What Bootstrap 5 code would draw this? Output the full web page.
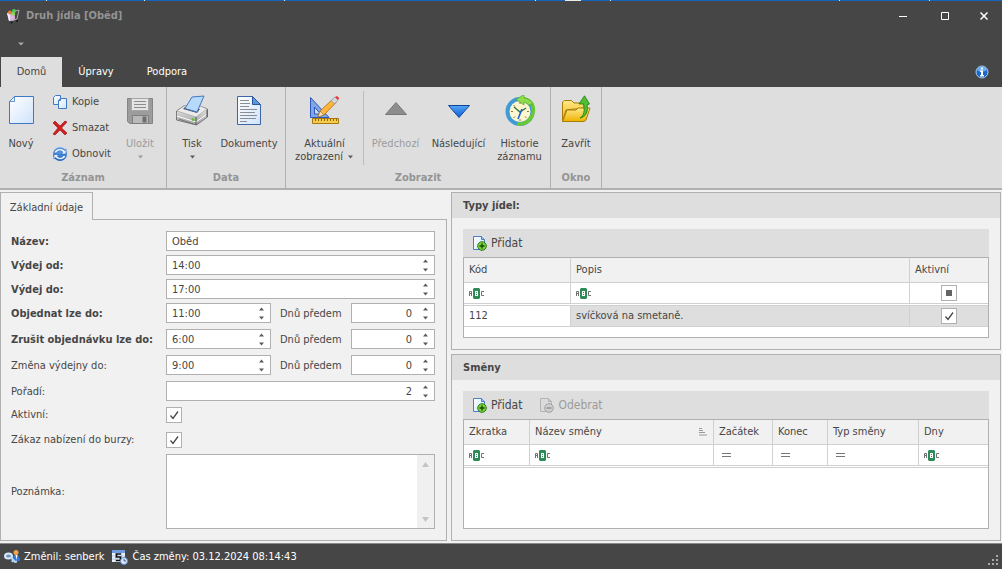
<!DOCTYPE html>
<html lang="cs">
<head>
<meta charset="utf-8">
<meta name="viewport" content="width=device-width, initial-scale=1">
<title>Druh jídla [Oběd]</title>
<link href="https://cdn.jsdelivr.net/npm/bootstrap@5.3.0/dist/css/bootstrap.min.css" rel="stylesheet">
<style>
:root{--dark:#464646;--line:#b0b0b0;--soft:#d0d0d0;--bar:#dedede;--pane:#f1f1f1;--ink:#464646}
body{font-family:"DejaVu Sans Condensed","DejaVu Sans",sans-serif;font-size:11px;line-height:14px;color:var(--ink);background:var(--pane)}
button,input,textarea{font:inherit;color:inherit}
.plain{border:0;background:none;padding:0}
svg{display:block;flex:none}
/* window frame */
.strip{height:1px;display:flex;gap:1px;background:#e8ece8}
.strip i{background:#1565c0}
.frame{background:var(--dark);color:#fff}
.titlebar{height:30px;padding-left:5px}
.titlebar h1{font-size:11px;line-height:14px;color:#949494;margin-left:5px}
.winbtn{width:42px;height:30px;display:grid;place-items:center}
.winbtn:last-child{width:36px}
.quick{height:26px;padding-left:17px}
.tabs{height:30px;padding-left:1px}
.rtab{height:30px;line-height:16px;color:#fff;text-decoration:none;display:flex;align-items:center;justify-content:center}
.rtab.active{background:var(--bar);color:var(--ink)}
.w-domu{width:61px}.w-upravy{width:68px}.w-podpora{width:74px}
/* ribbon */
.ribbon{background:var(--bar);border-bottom:2px solid var(--line);height:103px}
.rgroup{border-right:1px solid var(--line);height:101px}
.rgroup h2{font-size:11px;line-height:16px;color:#949494;text-align:center;margin:0;font-weight:700;height:18px}
.big{display:flex;flex-direction:column;align-items:center;justify-content:flex-start;text-align:center;padding-top:8px}
.big svg.pic{margin-bottom:10px}
.big .drop{margin-top:4px}
.lh13{line-height:13px}
.off,.off:disabled{color:#9b9b9b}
.stack{width:65px;margin-left:10px;padding-top:2px}
.stack button{height:26px;display:flex;align-items:center;gap:4px;white-space:nowrap}
.vline{width:1px;height:74px;background:#bcbcbc;margin-top:4px}
.g167{width:167px}.g119{width:119px}.g265{width:265px}.g51{width:51px}
.b42{width:42px}.b46{width:46px}.b50{width:50px}.b59{width:59px}.b63{width:63px}.b64{width:64px}.b77{width:77px}
/* work area */
.work{display:grid;grid-template-columns:447fr 550fr;gap:4px;padding:2px 1px 2px 0;flex:1}
.pane-tab{border:1px solid var(--line);border-bottom:0;background:var(--pane);height:28px;width:93px;margin-bottom:-1px;position:relative;z-index:1;margin-top:0;padding-top:2px;text-align:center}
.pane{border:1px solid var(--line);background:var(--pane)}
.formpane{padding:11px 11px 11px 10px}
.frow{display:grid;grid-template-columns:155px 1fr;height:24px;align-items:start}
.frow.r26{height:26px}
.frow.r25{height:25px}
.frow.r22{height:22px}
.frow.note{height:75px;align-items:center}
.frow > label,.frow .lab{line-height:22px}
.frow.chk > label{line-height:16px}
.field{border:1px solid var(--line);background:#fff;height:20px;display:flex;min-width:0}
.field input{border:0;outline:0;background:none;flex:1;min-width:0;padding:0 5px;height:18px}
.spin{width:17px;display:grid;grid-template-rows:9px 9px}
.spin button{display:grid;place-items:center}
.trio{display:grid;grid-template-columns:105fr 80fr 84fr}
.trio .lab{padding-left:9px}
.tick{appearance:none;width:16px;height:16px;margin:0;display:block;border:1px solid var(--line);background:#fff center/14px 14px no-repeat}
.tick:checked{background-image:url("data:image/svg+xml,%3Csvg xmlns='http://www.w3.org/2000/svg' viewBox='0 0 14 14'%3E%3Cpath d='M3.5 7.5l2.5 3 5-7' fill='none' stroke='%23464646' stroke-width='1.3'/%3E%3C/svg%3E")}
.tick.mid{background-image:linear-gradient(#646464,#646464);background-size:6px 6px}
.memo{border:1px solid var(--line);background:#fff;height:75px}
.memo textarea{border:0;outline:0;resize:none;flex:1;min-width:0;overflow:hidden}
.memo .scr{width:17px;background:#f0f0f0;padding:7px 0 6px}
.ghead{background:var(--bar);height:25px;line-height:25px;padding-left:11px;font-size:11px;font-weight:700;margin:0}
.gbody{padding:11px}
.tools{background:var(--bar);height:28px;padding-left:9px;gap:17px;font-size:12px}
.tools button{display:flex;align-items:center;gap:3px}
.gridbox{border:1px solid var(--line);background:#fff}
.gridbox.pad{padding-bottom:10px}
.gridbox table{width:100%;table-layout:fixed;border-collapse:separate;border-spacing:0}
.gridbox th,.gridbox td{border-right:1px solid var(--soft);border-bottom:1px solid var(--soft);padding:0 5px;font-weight:400;vertical-align:middle;white-space:nowrap}
.gridbox th:last-child,.gridbox td:last-child{border-right:0}
.gridbox th{height:25px;background:var(--pane)}
.gridbox .filt td{height:21px}
.gridbox .gap td{height:2px;padding:0;border-right:0}
.gridbox .rec td{height:21px}
.gridbox .sel{background:var(--bar)}
.gridbox .tick{margin:auto}
.c107{width:107px}.c78{width:78px}.c66{width:66px}.c59{width:59px}.c55{width:55px}.c91{width:91px}.c69{width:69px}
.status{background:var(--dark);color:#fff;height:26px;border-top:1px solid #8a8a8a;padding:0 3px 0 4px}
</style>
<script src="https://cdn.jsdelivr.net/npm/bootstrap@5.3.0/dist/js/bootstrap.bundle.min.js"></script>
</head>
<body class="d-flex flex-column min-vh-100">
<!-- shared glyphs and gradients -->
<svg width="0" height="0" class="position-absolute" aria-hidden="true">
<defs>
<linearGradient id="gp" x2="1" y2="1"><stop offset="0" stop-color="#fff"/><stop offset="1" stop-color="#cfe3fb"/></linearGradient>
<linearGradient id="gb" x2="0" y2="1"><stop offset="0" stop-color="#7db8f5"/><stop offset="1" stop-color="#1b5fc4"/></linearGradient>
<linearGradient id="gd" x2="0" y2="1"><stop offset="0" stop-color="#55a5f5"/><stop offset="1" stop-color="#0b5fd6"/></linearGradient>
<linearGradient id="gg" x2="0" y2="1"><stop offset="0" stop-color="#f3f3f3"/><stop offset="1" stop-color="#9a9a9a"/></linearGradient>
<linearGradient id="gy" x2="0" y2="1"><stop offset="0" stop-color="#ffe98a"/><stop offset="1" stop-color="#eeb200"/></linearGradient>
<symbol id="up" viewBox="0 0 7 4"><path d="M1 3.500h5L3.500.5z" fill="#5a5a5a"/></symbol>
<symbol id="dn" viewBox="0 0 7 4"><path d="M1 .5h5L3.500 3.500z" fill="#5a5a5a"/></symbol>
<symbol id="abc" viewBox="0 0 16 11"><path d="M5 0h5l1 1v9l-1 1H5L4 10V1z" fill="#2e8b57"/><path d="M.5 8V3.500h2V8M.5 5.500h2M15 3.500h-2.500v4H15" fill="none" stroke="#707070"/><path d="M6 3h3v5H6z" fill="#fff"/><path d="M7 4h1v1H7zM7 6h1v1H7z" fill="#2e8b57"/></symbol>
<symbol id="eq" viewBox="0 0 9 4"><path d="M0 .5h9M0 3.500h9" stroke="#777"/></symbol>
<symbol id="add" viewBox="0 0 16 16"><path d="M1.500 1.500h8l3 3v10h-11z" fill="url(#gp)" stroke="#4a7fc0"/><path d="M9.500 1.500v3h3" fill="#9cc3ee" stroke="#4a7fc0"/><circle cx="10" cy="11" r="4.300" fill="#7bd63c" stroke="#2a7a12"/><path d="M7.500 11h5M10 8.500v5" stroke="#174d08" stroke-width="1.400"/></symbol>
<symbol id="rem" viewBox="0 0 16 16"><path d="M1.500 1.500h8l3 3v10h-11z" fill="#dadada" stroke="#b3b3b3"/><path d="M9.500 1.500v3h3" fill="#c4c4c4" stroke="#b3b3b3"/><circle cx="10" cy="11" r="4.300" fill="#cfcfcf" stroke="#a0a0a0"/><path d="M7.500 11h5" stroke="#8c8c8c" stroke-width="1.400"/></symbol>
</defs></svg>

<div class="strip"><i style="flex:46"></i><i style="flex:97"></i><i style="flex:138"></i><i style="flex:250"></i><i style="flex:29"></i><i style="flex:14;background:#e8ece8"></i><i style="flex:29"></i><i style="flex:227"></i><i style="flex:89"></i><i style="flex:72"></i></div>
<header class="frame">
  <div class="titlebar d-flex align-items-center">
    <svg width="16" height="16" viewBox="0 0 16 16"><path d="M2 5l7-1 1 8-6 1z" fill="#b9a7e6"/><path d="M2 5l3-.5.600 8.300L4 13z" fill="#eef0ff"/><path d="M5.500 7l4-.5.500 5-4 1z" fill="#e6b3dd"/><circle cx="5" cy="4.500" r="2" fill="#e97d3c"/><circle cx="9" cy="3" r="2" fill="#54c94a"/><circle cx="8.500" cy="6" r="1.700" fill="#8bdc55"/><path d="M10.500 3L14 2l-2 9-6 2" fill="none" stroke="#a9a9a9"/><circle cx="6.500" cy="14.500" r="1" fill="#111"/><circle cx="12" cy="13" r="1" fill="#111"/></svg>
    <h1 class="fw-bold mb-0 flex-grow-1">Druh jídla [Oběd]</h1>
    <button class="plain winbtn" aria-label="Minimalizovat"><svg width="8" height="8" viewBox="0 0 8 8"><path d="M0 4.500h8" stroke="#fff"/></svg></button>
    <button class="plain winbtn" aria-label="Maximalizovat"><svg width="8" height="8" viewBox="0 0 8 8"><path d="M.5.5h7v7h-7z" fill="none" stroke="#fff"/></svg></button>
    <button class="plain winbtn" aria-label="Zavřít okno"><svg width="8" height="8" viewBox="0 0 8 8"><path d="M.5.5l7 7M7.500.5l-7 7" stroke="#fff" stroke-width="1.500"/></svg></button>
  </div>
  <div class="quick d-flex align-items-center"><button class="plain" aria-label="Panel rychlého přístupu"><svg width="7" height="4" viewBox="0 0 7 4"><path d="M1 .5h6L4 3.500z" fill="#a8a8a8"/></svg></button></div>
  <nav class="tabs d-flex align-items-center">
    <a href="#" class="rtab active w-domu">Domů</a>
    <a href="#" class="rtab w-upravy">Úpravy</a>
    <a href="#" class="rtab w-podpora">Podpora</a>
    <button class="plain ms-auto me-2 pe-1" aria-label="Informace"><svg width="16" height="16" viewBox="0 0 16 16"><circle cx="8" cy="8" r="6" fill="#1b68cc" stroke="#a9cdf5"/><path d="M3 6a5.400 5.400 0 0 1 10 0q-5 3-10 0z" fill="#6fb1f2"/><path d="M7 3.500h2v2H7zM6 6.500h3V11h1v1.500H6V11h1V8H6z" fill="#fff"/></svg></button>
  </nav>
</header>

<div class="ribbon d-flex">
  <section class="rgroup g167 d-flex flex-column">
    <div class="d-flex flex-grow-1">
      <button class="plain big b42"><svg class="pic" width="32" height="32" viewBox="0 0 32 32"><path d="M9.500 1.500h19v27h-24v-22z" fill="url(#gp)" stroke="#3f79c4"/><path d="M4.500 6.500h5v-5z" fill="#eaf4ff" stroke="#3f79c4" stroke-width=".8"/></svg>Nový</button>
      <div class="stack d-flex flex-column">
        <button class="plain"><svg width="16" height="16" viewBox="0 0 16 16"><path d="M3.500 1.500h5v9h-7v-7z" fill="url(#gp)" stroke="#3f79c4"/><path d="M8.500 4.500h6v10h-8v-8z" fill="url(#gp)" stroke="#3f79c4"/><path d="M6.500 6.500h2v-2z" fill="#fff" stroke="#3f79c4"/></svg>Kopie</button>
        <button class="plain"><svg width="16" height="16" viewBox="0 0 16 16"><path d="M1 3l2-2 5 5 5-5 2 1-5.500 6L15 13l-2 2-5-5-5 5-2-1 5-6z" fill="#d81e1e" stroke="#8d0d0d" stroke-width=".6"/></svg>Smazat</button>
        <button class="plain"><svg width="16" height="16" viewBox="0 0 16 16"><circle cx="8" cy="8" r="7" fill="url(#gb)"/><path d="M2 7c1-5 8-6 10.500-2.500L14 3v5H9l1.800-1.800C9 4 5.500 4.500 4.500 7zM14 9.500c-1 4.500-7.500 5.500-10.500 2L2 13V8.500h5L5.400 10.200c2 2 5 1.500 6-.7z" fill="#e4f2ff" stroke="#1c5bb0" stroke-width=".6"/></svg>Obnovit</button>
      </div>
      <button class="plain big b46 off" disabled><svg class="pic" width="32" height="32" viewBox="0 0 32 32"><path d="M3.500 3.500h25v25h-23l-2-2z" fill="#9c9c9c" stroke="#858585"/><path d="M7.500 3.500h17v12h-17z" fill="#e4e4e4" stroke="#a8a8a8"/><path d="M10 6.500h12M10 9.500h12M10 12.500h12" stroke="#8c8c8c"/><path d="M8.500 20.500h16v8h-16z" fill="#b9b9b9" stroke="#7e7e7e"/><path d="M18.500 21.500h4v6h-4z" fill="#6e6e6e"/></svg>Uložit<svg class="drop opacity-50" width="7" height="4"><use href="#dn"/></svg></button>
    </div>
    <h2>Záznam</h2>
  </section>
  <section class="rgroup g119 d-flex flex-column">
    <div class="d-flex flex-grow-1">
      <button class="plain big b50"><svg class="pic" width="34" height="32" viewBox="0 0 34 32"><path d="M1.500 16l7-5h16l8 3v8l-11 8L1.500 25z" fill="url(#gg)" stroke="#666" stroke-width=".8"/><path d="M2 16l7-5h16l7 3-11 8z" fill="#ececec" stroke="#999" stroke-width=".6"/><path d="M8 14l2-2 15 2-3 4z" fill="#505050"/><path d="M10 13.500L17 2l12-1-7 16z" fill="#b7dafa" stroke="#3f79c4"/><path d="M2 21l19 6 11-8" stroke="#fff" fill="none"/><path d="M21 22v8M32 15v7" stroke="#555" fill="none"/><path d="M4 24l14 5" stroke="#777"/><circle cx="18" cy="24.500" r="1.500" fill="#62c42c"/></svg>Tisk<svg class="drop" width="7" height="4"><use href="#dn"/></svg></button>
      <button class="plain big b64"><svg class="pic" width="32" height="32" viewBox="0 0 32 32"><path d="M4.500 1.500h15l8 8v20h-23z" fill="url(#gp)" stroke="#3c66a8"/><path d="M19.500 1.500v8h8z" fill="#5b97de" stroke="#2b57a0"/><path d="M7 5.500h9M7 8.500h10M7 11.500h9M7 14.500h17M7 17.500h15M7 20.500h17M7 23.500h16M7 26.500h7" stroke="#8a8f96"/></svg>Dokumenty</button>
    </div>
    <h2>Data</h2>
  </section>
  <section class="rgroup g265 d-flex flex-column">
    <div class="d-flex flex-grow-1">
      <button class="plain big b77 lh13"><svg class="pic" width="32" height="32" viewBox="0 0 32 32"><path d="M1.500 2.500L20 22.500H1.500z" fill="#7ea6e8" stroke="#2d58b8"/><path d="M5.500 12l6 7h-6z" fill="#dedede" stroke="#2d58b8"/><path d="M3.500 23.500h26v5h-26z" fill="#f5cb4a" stroke="#a67a10"/><path d="M6.500 24v2M9.500 24v2M12.500 24v2M15.500 24v2M18.500 24v2M21.500 24v2M24.500 24v2M27.500 24v2" stroke="#8a6410"/><path d="M9 22l2-6L24 4l3 3.500L15 20z" fill="#ffb53a" stroke="#95600c" stroke-width=".7"/><path d="M9 22l2-6 4 4z" fill="#f7dfba" stroke="#8a6a40" stroke-width=".6"/><path d="M22 5.500L26 2l3 3-3.500 4z" fill="#d2d6dc" stroke="#777" stroke-width=".5"/><path d="M26 2l2-1 2.200 2.200L29 5z" fill="#e33"/></svg>Aktuální<span class="d-flex align-items-center">zobrazení<svg class="ms-1" width="7" height="4"><use href="#dn"/></svg></span></button>
      <div class="vline"></div>
      <button class="plain big b63 off" disabled><svg class="pic" width="32" height="32" viewBox="0 0 32 32"><path d="M5.500 19.500h21l-10.500-12z" fill="#8d8d8d" stroke="#777"/></svg>Předchozí</button>
      <button class="plain big b63"><svg class="pic" width="32" height="32" viewBox="0 0 32 32"><path d="M5.500 10.500h21L16 22.500z" fill="url(#gd)" stroke="#0d459c"/></svg>Následující</button>
      <button class="plain big b59 lh13"><svg class="pic" width="32" height="32" viewBox="0 0 32 32"><circle cx="16" cy="16.500" r="12.500" fill="#fff6cf" stroke="#3f9bd6" stroke-width="4"/><path d="M15 4C25 2 31 10 29 18s-9 12-16 11" fill="none" stroke="#6cc832" stroke-width="3.500"/><path d="M12 4.500l8-5V3c4 .5 8 3 9 6l-4 1-5-3v3z" fill="#8cdc4c" stroke="#4aa41c" stroke-width=".6"/><path d="M16 7v2M16 24v2M7 16.500h2M23 16.500h2M9.500 10l1.500 1.500M22.500 23L21 21.500M9.500 23l1.500-1.500" stroke="#8a7440"/><path d="M10 12l6 5 6-4" fill="none" stroke="#3a7a4a" stroke-width="1.500"/><path d="M18 14l-4 10" stroke="#1763d8" stroke-width="1.600"/></svg>Historie<br>záznamu</button>
    </div>
    <h2>Zobrazit</h2>
  </section>
  <section class="rgroup g51 d-flex flex-column">
    <div class="d-flex flex-grow-1">
      <button class="plain big b50"><svg class="pic" width="32" height="32" viewBox="0 0 32 32"><path d="M2.500 26.500V7l2-1.500h7L14 8h10v5l-18 2z" fill="url(#gy)" stroke="#a87d08"/><path d="M2.500 26.500L7 15h9l2-2h12l-4 12-2 1.500z" fill="url(#gy)" stroke="#a87d08"/><path d="M20 23c4-2 5-8 3.500-14H19L24.500.8 29.500 9l-2.500 1c1.500 7-1.500 12-7 13z" fill="#4fc02f" stroke="#1c7a12" stroke-width=".8"/></svg>Zavřít</button>
    </div>
    <h2>Okno</h2>
  </section>
</div>

<main class="work">
  <section class="d-flex flex-column">
    <button class="plain pane-tab">Základní údaje</button>
    <form class="pane formpane flex-grow-1">
      <div class="frow"><label class="fw-bold" for="nazev">Název:</label><div class="field"><input id="nazev" value="Oběd"></div></div>
      <div class="frow"><label class="fw-bold" for="vod">Výdej od:</label><div class="field"><input id="vod" value="14:00"></div></div>
      <div class="frow"><label class="fw-bold" for="vdo">Výdej do:</label><div class="field"><input id="vdo" value="17:00"></div></div>
      <div class="frow r26"><label class="fw-bold" for="obj">Objednat lze do:</label><div class="trio"><div class="field"><input id="obj" value="11:00"></div><label class="lab" for="d1">Dnů předem</label><div class="field"><input id="d1" class="text-end" value="0"></div></div></div>
      <div class="frow r26"><label class="fw-bold" for="zru">Zrušit objednávku lze do:</label><div class="trio"><div class="field"><input id="zru" value="6:00"></div><label class="lab" for="d2">Dnů předem</label><div class="field"><input id="d2" class="text-end" value="0"></div></div></div>
      <div class="frow r26"><label for="zme">Změna výdejny do:</label><div class="trio"><div class="field"><input id="zme" value="9:00"></div><label class="lab" for="d3">Dnů předem</label><div class="field"><input id="d3" class="text-end" value="0"></div></div></div>
      <div class="frow r26"><label for="por">Pořadí:</label><div class="field"><input id="por" class="text-end" value="2"></div></div>
      <div class="frow r25 chk"><label for="akt">Aktivní:</label><input id="akt" type="checkbox" class="tick" checked></div>
      <div class="frow r22 chk"><label for="zak">Zákaz nabízení do burzy:</label><input id="zak" type="checkbox" class="tick" checked></div>
      <div class="frow note"><label for="poz">Poznámka:</label><div class="memo d-flex"><textarea id="poz"></textarea><div class="scr d-flex flex-column justify-content-between align-items-center"><svg width="7" height="5" viewBox="0 0 7 5"><path d="M0 5h7L3.500 0z" fill="#c4c4c4"/></svg><svg width="7" height="5" viewBox="0 0 7 5"><path d="M0 0h7L3.500 5z" fill="#c4c4c4"/></svg></div></div></div>
    </form>
  </section>

  <div class="d-flex flex-column gap-1">
    <section class="pane">
      <h2 class="ghead">Typy jídel:</h2>
      <div class="gbody">
        <div class="tools d-flex align-items-center"><button class="plain"><svg width="16" height="16"><use href="#add"/></svg>Přidat</button></div>
        <div class="gridbox pad">
          <table>
            <colgroup><col class="c107"><col><col class="c78"></colgroup>
            <thead><tr><th>Kód</th><th>Popis</th><th>Aktivní</th></tr></thead>
            <tbody>
              <tr class="filt"><td><svg width="16" height="11"><use href="#abc"/></svg></td><td><svg width="16" height="11"><use href="#abc"/></svg></td><td><input type="checkbox" class="tick mid" aria-label="Filtr aktivní"></td></tr>
              <tr class="gap"><td colspan="3"></td></tr>
              <tr class="rec"><td>112</td><td class="sel">svíčková na smetaně.</td><td class="sel"><input type="checkbox" class="tick" aria-label="Aktivní" checked></td></tr>
            </tbody>
          </table>
        </div>
      </div>
    </section>
    <section class="pane flex-grow-1 d-flex flex-column">
      <h2 class="ghead">Směny</h2>
      <div class="gbody flex-grow-1 d-flex flex-column">
        <div class="tools d-flex align-items-center"><button class="plain"><svg width="16" height="16"><use href="#add"/></svg>Přidat</button><button class="plain off" disabled><svg width="16" height="16"><use href="#rem"/></svg>Odebrat</button></div>
        <div class="gridbox flex-grow-1">
          <table>
            <colgroup><col class="c66"><col><col class="c59"><col class="c55"><col class="c91"><col class="c69"></colgroup>
            <thead><tr><th>Zkratka</th><th><span class="d-flex justify-content-between align-items-center">Název směny<svg width="9" height="8" viewBox="0 0 9 8"><path d="M0 .5h3M0 2.500h4M0 4.500h6M0 7h8" stroke="#999"/></svg></span></th><th>Začátek</th><th>Konec</th><th>Typ směny</th><th>Dny</th></tr></thead>
            <tbody>
              <tr class="filt"><td><svg width="16" height="11"><use href="#abc"/></svg></td><td><svg width="16" height="11"><use href="#abc"/></svg></td><td class="ps-2"><svg width="9" height="4"><use href="#eq"/></svg></td><td class="ps-2"><svg width="9" height="4"><use href="#eq"/></svg></td><td class="ps-2"><svg width="9" height="4"><use href="#eq"/></svg></td><td><svg width="16" height="11"><use href="#abc"/></svg></td></tr>
              <tr class="gap"><td colspan="6"></td></tr>
            </tbody>
          </table>
        </div>
      </div>
    </section>
  </div>
</main>

<footer class="status d-flex align-items-center">
  <svg width="16" height="16" viewBox="0 0 16 16"><circle cx="12" cy="3.500" r="2.500" fill="#f0a050"/><path d="M8 12c0-4 2-6 4-6s4 2 4 6z" fill="#2f78d8"/><path d="M11.500 6l1 5 1-5z" fill="#fff"/><ellipse cx="4.500" cy="7" rx="3.500" ry="2.500" fill="#6f93bd" stroke="#d7e9fb" stroke-width="2"/><path d="M7 8.500l4 4.500 2-.5M9 11L8 13" fill="none" stroke="#b8d4f2" stroke-width="2"/></svg>
  <span class="ms-1">Změnil: senberk</span>
  <svg class="ms-2 me-1" width="16" height="16" viewBox="0 0 16 16"><path d="M0 1h13v12H0z" fill="#e9f1fb"/><path d="M0 1h13v3H0z" fill="#6f9de0"/><path d="M0 7h13M0 10h13M3.500 4v9M9.500 4v9" stroke="#b4c8e2"/><path d="M9 5H4.500v3h4v3.500H4" fill="none" stroke="#111" stroke-width="1.700"/><circle cx="12" cy="12" r="3.500" fill="#dcebfc" stroke="#5b8ccb"/><path d="M12 10v2h2" fill="none" stroke="#335" stroke-width=".8"/></svg>
  <span class="ms-px">Čas změny: 03.12.2024 08:14:43</span>
  <svg class="ms-auto mt-2" width="11" height="11" viewBox="0 0 11 11"><path d="M8 0h2v2H8zM4 4h2v2H4zM8 4h2v2H8zM0 8h2v2H0zM4 8h2v2H4zM8 8h2v2H8z" fill="#a8a8a8"/></svg>
</footer>
<script>
// spin arrows for every numeric and time field
document.querySelectorAll('.field').forEach(f => {
  if (f.querySelector('#nazev')) return;
  f.insertAdjacentHTML('beforeend', '<div class="spin"><button type="button" class="plain" aria-label="Více"><svg width="7" height="4"><use href="#up"/></svg></button><button type="button" class="plain" aria-label="Méně"><svg width="7" height="4"><use href="#dn"/></svg></button></div>');
});
</script>
</body>
</html>
